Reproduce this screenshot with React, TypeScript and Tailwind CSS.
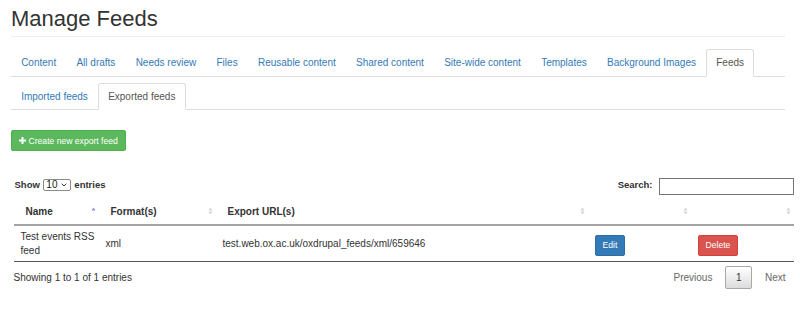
import React from "react";

function SortBoth() {
  return (
    <svg width="5" height="9" viewBox="0 0 5 9" className="absolute right-[3px] top-1/2 -translate-y-1/2">
      <polygon points="0.5,4 2.5,1 4.5,4" fill="#d4d4d4" />
      <polygon points="0.5,5 2.5,8 4.5,5" fill="#d4d4d4" />
    </svg>
  );
}

function SortAsc() {
  return (
    <svg width="5" height="9" viewBox="0 0 5 9" className="absolute right-[3px] top-1/2 -translate-y-1/2">
      <polygon points="0.5,4 2.5,1 4.5,4" fill="#8f8fdc" />
    </svg>
  );
}

export default function App() {
  const tabs1 = [
    "Content",
    "All drafts",
    "Needs review",
    "Files",
    "Reusable content",
    "Shared content",
    "Site-wide content",
    "Templates",
    "Background Images",
    "Feeds",
  ];
  const tabs2 = ["Imported feeds", "Exported feeds"];

  return (
    <div className="w-[800px] h-[332px] bg-white text-[#333] overflow-hidden font-['Liberation_Sans',Arial,sans-serif]">
      <div className="ml-[11px] w-[774px]">
        <div className="pt-[7px] pb-[5px] border-b border-[#eee]">
          <h1 className="text-[22px] leading-[24px] font-normal text-[#333]">Manage Feeds</h1>
        </div>

        <ul className="mt-[12px] flex border-b border-[#ddd]">
          {tabs1.map((t) => (
            <li key={t} className="-mb-px">
              <a
                className={
                  t === "Feeds"
                    ? "block px-[9.15px] pt-[6px] pb-[6px] leading-[14px] text-[10px] border border-[#ddd] border-b-white rounded-t-[3px] bg-white text-[#555]"
                    : "block px-[9.15px] pt-[6px] pb-[6px] leading-[14px] text-[10px] border border-transparent text-[#337ab7]"
                }
              >
                {t}
              </a>
            </li>
          ))}
        </ul>

        <ul className="mt-[6px] flex border-b border-[#ddd]">
          {tabs2.map((t) => (
            <li key={t} className="-mb-px">
              <a
                className={
                  t === "Exported feeds"
                    ? "block px-[9.15px] pt-[5.5px] pb-[5.5px] leading-[14px] text-[10px] border border-[#ddd] border-b-white rounded-t-[3px] bg-white text-[#555]"
                    : "block px-[9.15px] pt-[5.5px] pb-[5.5px] leading-[14px] text-[10px] border border-transparent text-[#337ab7]"
                }
              >
                {t}
              </a>
            </li>
          ))}
        </ul>

        <button className="mt-[20px] flex items-center h-[21px] px-[7px] bg-[#5cb85c] border border-[#4cae4c] rounded-[2px] text-white text-[8.6px] leading-[12px]">
          <svg width="7" height="7" viewBox="0 0 7 7" className="mr-[2.5px]">
            <rect x="2.5" y="0" width="2" height="7" fill="#fff" />
            <rect x="0" y="2.5" width="7" height="2" fill="#fff" />
          </svg>
          Create new export feed
        </button>
      </div>

      <div className="ml-[13.5px] w-[780px] mt-[27px]">
        <div className="flex justify-between items-center h-[17px]">
          <div className="flex items-center pl-[1px] mb-[3px] text-[9.5px] font-bold leading-[12px]">
            <span>Show</span>
            <div className="ml-[3.5px] flex items-center h-[12px] w-[28px] border border-[#8a8a8a] rounded-[2px] pl-[2px] font-normal text-[10px] leading-[10px] text-[#222]">
              <span>10</span>
              <svg width="6" height="4" viewBox="0 0 6 4" className="ml-[3.5px]">
                <polyline points="0.7,0.7 3,3 5.3,0.7" fill="none" stroke="#333" strokeWidth="1" />
              </svg>
            </div>
            <span className="ml-[3px]">entries</span>
          </div>
          <div className="flex items-center">
            <span className="text-[9.5px] font-bold leading-[12px] mb-[3px]">Search:</span>
            <div className="ml-[6px] w-[135px] h-[17px] border border-[#767676] bg-white" />
          </div>
        </div>

        <table className="mt-[2px] w-[780px] table-fixed border-collapse">
          <colgroup>
            <col className="w-[85px]" />
            <col className="w-[117px]" />
            <col className="w-[372px]" />
            <col className="w-[103px]" />
            <col className="w-[103px]" />
          </colgroup>
          <thead>
            <tr className="border-b-2 border-[#a3a3a3]">
              <th className="relative text-left pl-[12px] pt-[8px] pb-[5px] text-[10px] leading-[14px] font-bold">
                Name
                <SortAsc />
              </th>
              <th className="relative text-left pl-[12px] pt-[8px] pb-[5px] text-[10px] leading-[14px] font-bold">
                Format(s)
                <SortBoth />
              </th>
              <th className="relative text-left pl-[12px] pt-[8px] pb-[5px] text-[10px] leading-[14px] font-bold">
                Export URL(s)
                <SortBoth />
              </th>
              <th className="relative text-left pl-[12px] pt-[8px] pb-[5px] text-[10px] leading-[14px] font-bold">
                <SortBoth />
              </th>
              <th className="relative text-left pl-[12px] pt-[8px] pb-[5px] text-[10px] leading-[14px] font-bold">
                <SortBoth />
              </th>
            </tr>
          </thead>
          <tbody>
            <tr className="border-b border-[#555]">
              <td className="pl-[7px] py-[4px] text-[10px] leading-[13.5px] align-middle">
                <span className="whitespace-nowrap">Test events RSS</span>
                <br />
                feed
              </td>
              <td className="pl-[7px] py-[4px] text-[10px] leading-[13.5px] align-middle">xml</td>
              <td className="pl-[7px] py-[4px] text-[10px] leading-[13.5px] align-middle whitespace-nowrap">
                test.web.ox.ac.uk/oxdrupal_feeds/xml/659646
              </td>
              <td className="pl-[7px] py-[4px] align-middle">
                <button className="h-[21px] px-[7px] bg-[#337ab7] border border-[#2e6da4] rounded-[2px] text-white text-[8.6px] leading-[12px]">
                  Edit
                </button>
              </td>
              <td className="pl-[7px] py-[4px] align-middle">
                <button className="h-[21px] px-[7px] bg-[#d9534f] border border-[#d43f3a] rounded-[2px] text-white text-[8.6px] leading-[12px]">
                  Delete
                </button>
              </td>
            </tr>
          </tbody>
        </table>

        <div className="mt-[4px] flex justify-between items-center h-[23px]">
          <span className="text-[10px] leading-[14px]">Showing 1 to 1 of 1 entries</span>
          <div className="flex items-center -mr-[3px] text-[10px] leading-[14px]">
            <span className="px-[10px] py-[4px] border border-transparent text-[#666]">Previous</span>
            <span className="ml-[2px] h-[23px] flex items-center px-[9.5px] border border-[#a8a8a8] rounded-[2px] bg-gradient-to-b from-white to-[#dcdcdc] text-[#333]">
              1
            </span>
            <span className="ml-[2px] px-[10px] py-[4px] border border-transparent text-[#666]">Next</span>
          </div>
        </div>
      </div>
    </div>
  );
}
